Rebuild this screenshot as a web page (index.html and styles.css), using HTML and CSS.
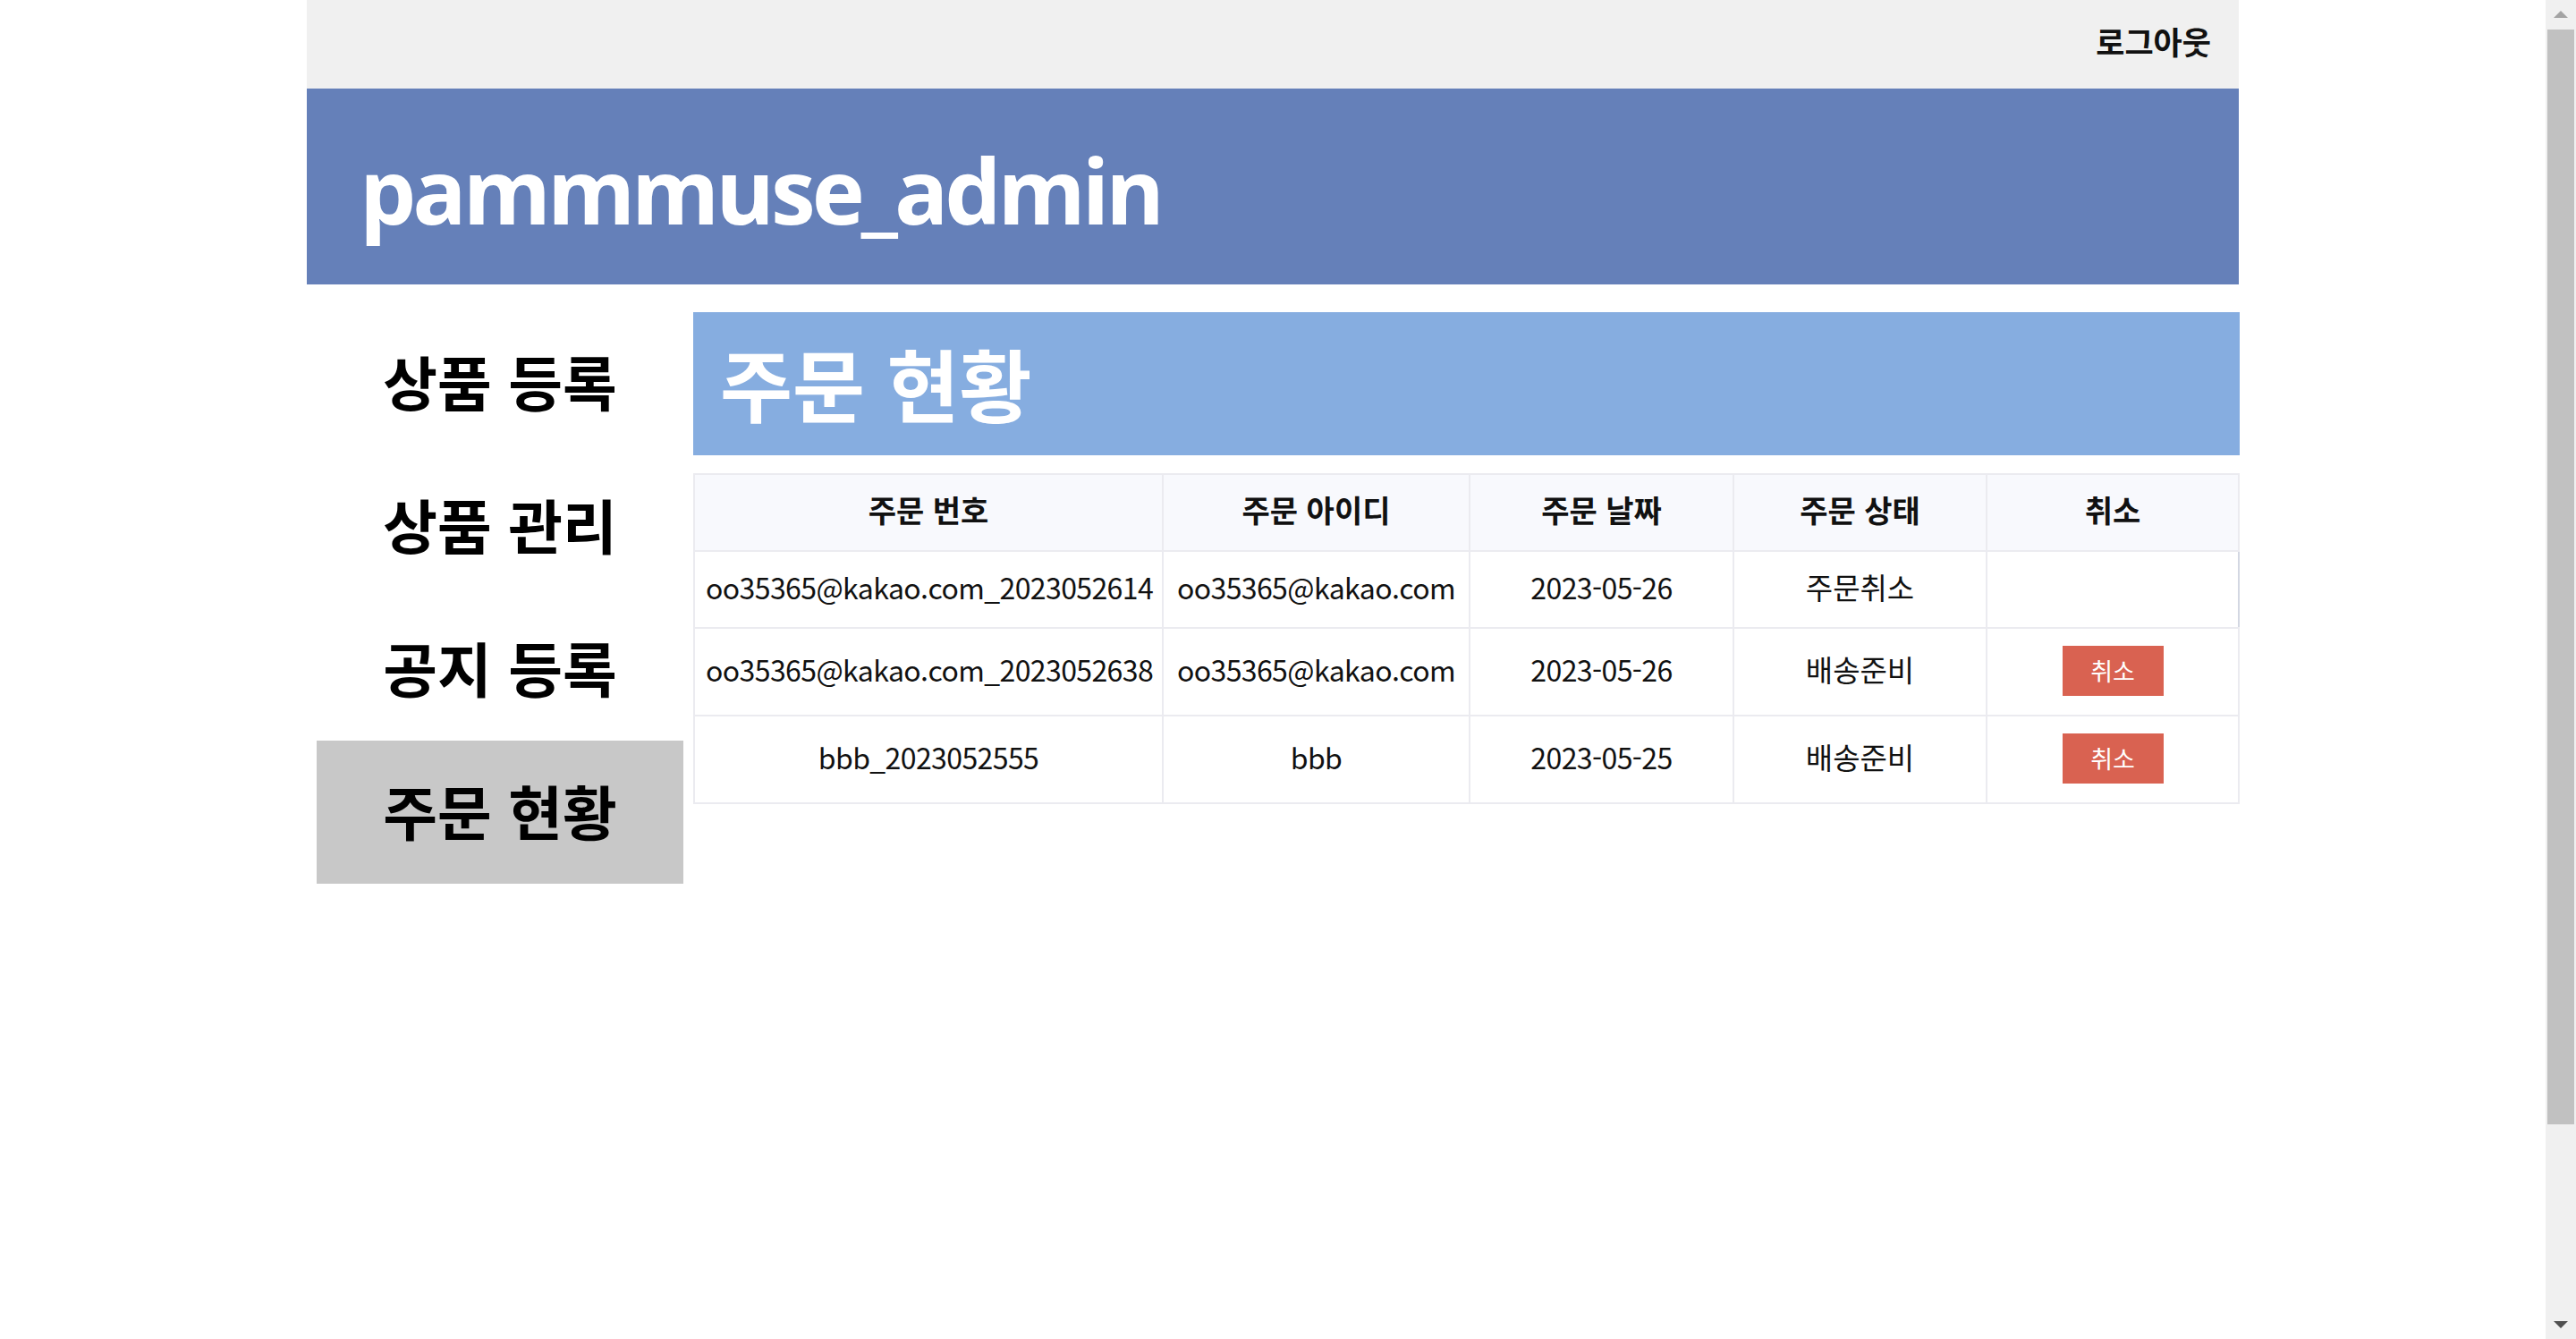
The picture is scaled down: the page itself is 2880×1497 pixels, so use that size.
FILE: index.html
```html
<!DOCTYPE html>
<html lang="ko">
<head>
<meta charset="utf-8">
<title>pammmuse_admin</title>
<link rel="stylesheet" href="styles.css">
</head>
<body>
<div class="page">
  <div class="topbar">
    <a class="logout">로그아웃</a>
  </div>
  <header class="brand">
    <h1 class="brand-title">pammmuse_admin</h1>
  </header>
  <div class="main">
    <nav class="side">
      <a class="nav-item">상품 등록</a>
      <a class="nav-item">상품 관리</a>
      <a class="nav-item">공지 등록</a>
      <a class="nav-item active">주문 현황</a>
    </nav>
    <section class="content">
      <h2 class="content-title">주문 현황</h2>
      <table class="orders">
        <colgroup>
          <col class="c-no">
          <col class="c-id">
          <col class="c-date">
          <col class="c-state">
          <col class="c-cancel">
        </colgroup>
        <thead>
          <tr>
            <th>주문 번호</th>
            <th>주문 아이디</th>
            <th>주문 날짜</th>
            <th>주문 상태</th>
            <th>취소</th>
          </tr>
        </thead>
        <tbody>
          <tr>
            <td>oo35365@kakao.com_2023052614</td>
            <td>oo35365@kakao.com</td>
            <td>2023-05-26</td>
            <td class="ko">주문취소</td>
            <td class="cancel-cell first"></td>
          </tr>
          <tr>
            <td>oo35365@kakao.com_2023052638</td>
            <td>oo35365@kakao.com</td>
            <td>2023-05-26</td>
            <td class="ko">배송준비</td>
            <td class="cancel-cell"><button class="cancel-btn">취소</button></td>
          </tr>
          <tr>
            <td>bbb_2023052555</td>
            <td>bbb</td>
            <td>2023-05-25</td>
            <td class="ko">배송준비</td>
            <td class="cancel-cell"><button class="cancel-btn">취소</button></td>
          </tr>
        </tbody>
      </table>
    </section>
  </div>
</div>
<div class="scrollbar" aria-hidden="true">
  <div class="sb-btn"><span class="sb-arrow-up"></span></div>
  <div class="sb-thumb"></div>
  <div class="sb-fill"></div>
  <div class="sb-btn"><span class="sb-arrow-down"></span></div>
</div>
</body>
</html>
```

FILE: styles.css
```css
body {
  margin: 0;
  padding-right: 34px;
  background: #ffffff;
  color: #000000;
  font-family: "Noto Sans CJK KR", "Noto Sans", sans-serif;
}

.page {
  width: 2160px;
  margin: 0 auto;
}

.topbar {
  height: 99px;
  background: #f0f0f0;
  display: flex;
  justify-content: flex-end;
  align-items: center;
  padding-right: 31px;
  box-sizing: border-box;
}

.logout {
  font-size: 35px;
  font-weight: 700;
  color: #111111;
  line-height: 1;
  margin-bottom: 9px;
}

.brand {
  height: 219px;
  background: #6580b9;
  box-sizing: border-box;
  padding: 63px 0 0 59px;
}

.brand-title {
  margin: 0;
  font-family: "Open Sans", "Noto Sans", sans-serif;
  font-weight: 700;
  font-size: 100px;
  line-height: 100px;
  color: #ffffff;
  letter-spacing: -4px;
}

.main {
  display: flex;
  gap: 11px;
  padding-left: 11px;
  margin-top: 30px;
}

.side {
  width: 410px;
  flex: none;
  display: flex;
  flex-direction: column;
}

.nav-item {
  height: 160px;
  display: flex;
  align-items: center;
  justify-content: center;
  font-size: 66px;
  font-weight: 700;
  color: #000000;
  padding-bottom: 6px;
  box-sizing: border-box;
}

.nav-item.active {
  background: #c8c8c8;
}

.content {
  flex: 1;
  padding-top: 1px;
}

.content-title {
  margin: 0;
  height: 160px;
  background: #86ade0;
  color: #ffffff;
  font-size: 88px;
  font-weight: 700;
  display: flex;
  align-items: center;
  padding-left: 30px;
  padding-bottom: 6px;
  box-sizing: border-box;
}

.orders {
  margin-top: 20px;
  width: 100%;
  border-collapse: collapse;
  table-layout: fixed;
}

.c-no { width: 524px; }
.c-id { width: 343px; }
.c-date { width: 295px; }
.c-state { width: 283px; }
.c-cancel { width: 282px; }

.orders th,
.orders td {
  border: 2px solid #ebebf0;
  padding: 17px 12px 23px;
  line-height: 44px;
  text-align: center;
  white-space: nowrap;
  color: #111111;
}

.orders th {
  background: #f8f9fd;
  font-weight: 700;
  font-size: 34px;
}

.orders td {
  font-weight: 400;
  font-size: 32px;
  letter-spacing: -0.6px;
}

.orders td.ko {
  font-size: 33px;
  letter-spacing: 0;
}

.orders td.cancel-cell {
  padding-top: 19px;
  padding-bottom: 21px;
}

.orders td.cancel-cell.first {
  border-right-color: #d3d7e2;
}

.cancel-btn {
  display: block;
  margin: 0 auto;
  width: 113px;
  height: 56px;
  padding: 0 0 2px;
  border: none;
  background: #d96251;
  color: #ffffff;
  font-family: "Noto Sans CJK KR", sans-serif;
  font-size: 27px;
  font-weight: 400;
}

.scrollbar {
  position: fixed;
  top: 0;
  right: 0;
  width: 34px;
  height: 100vh;
  background: #f0f0f0;
  display: flex;
  flex-direction: column;
}

.sb-btn {
  height: 32px;
  flex: none;
  display: flex;
  align-items: center;
  justify-content: center;
}

.sb-arrow-up {
  width: 0;
  height: 0;
  border-left: 8px solid transparent;
  border-right: 8px solid transparent;
  border-bottom: 8px solid #a3a3a3;
}

.sb-arrow-down {
  width: 0;
  height: 0;
  border-left: 8px solid transparent;
  border-right: 8px solid transparent;
  border-top: 8px solid #505050;
}

.sb-thumb {
  height: 1224px;
  margin: 1px 2px 0;
  background: #c1c1c1;
  flex: none;
}

.sb-fill {
  flex: 1;
}
```
